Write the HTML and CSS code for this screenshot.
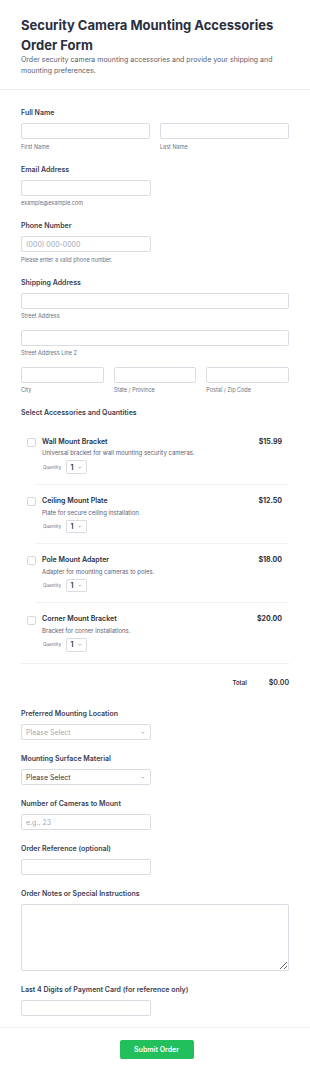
FILE: index.html
```html
<!DOCTYPE html>
<html lang="en">
<head>
<meta charset="utf-8">
<title>Security Camera Mounting Accessories Order Form</title>
<link rel="stylesheet" href="styles.css">
</head>
<body>
<div class="page">
  <header class="header">
    <h1 class="title">Security Camera Mounting Accessories Order Form</h1>
    <p class="subtitle">Order security camera mounting accessories and provide your shipping and mounting preferences.</p>
  </header>

  <form class="form">
    <div class="field">
      <div class="label">Full Name</div>
      <div class="row two">
        <div class="col"><input class="input" type="text"><div class="sublabel">First Name</div></div>
        <div class="col"><input class="input" type="text"><div class="sublabel">Last Name</div></div>
      </div>
    </div>

    <div class="field">
      <div class="label">Email Address</div>
      <div class="half"><input class="input" type="email"><div class="sublabel">example@example.com</div></div>
    </div>

    <div class="field">
      <div class="label">Phone Number</div>
      <div class="half"><input class="input" type="tel" placeholder="(000) 000-0000"><div class="sublabel">Please enter a valid phone number.</div></div>
    </div>

    <div class="field">
      <div class="label">Shipping Address</div>
      <input class="input" type="text"><div class="sublabel">Street Address</div>
      <div class="gap-top"><input class="input" type="text"><div class="sublabel">Street Address Line 2</div></div>
      <div class="row three gap-top">
        <div class="col"><input class="input" type="text"><div class="sublabel">City</div></div>
        <div class="col"><input class="input" type="text"><div class="sublabel">State / Province</div></div>
        <div class="col"><input class="input" type="text"><div class="sublabel">Postal / Zip Code</div></div>
      </div>
    </div>

    <div class="field products-field">
      <div class="label">Select Accessories and Quantities</div>
      <div class="products">
        <div class="product">
          <span class="checkbox"></span>
          <div class="product-body">
            <div class="product-name">Wall Mount Bracket</div>
            <div class="product-desc">Universal bracket for wall mounting security cameras.</div>
            <div class="qty"><span class="qty-label">Quantity</span><span class="qty-select">1<svg class="chev" viewBox="0 0 6 4"><path d="M1 1l2 2 2-2" fill="none" stroke="currentColor" stroke-width="0.8"/></svg></span></div>
          </div>
          <div class="price">$15.99</div>
        </div>
        <div class="product">
          <span class="checkbox"></span>
          <div class="product-body">
            <div class="product-name">Ceiling Mount Plate</div>
            <div class="product-desc">Plate for secure ceiling installation.</div>
            <div class="qty"><span class="qty-label">Quantity</span><span class="qty-select">1<svg class="chev" viewBox="0 0 6 4"><path d="M1 1l2 2 2-2" fill="none" stroke="currentColor" stroke-width="0.8"/></svg></span></div>
          </div>
          <div class="price">$12.50</div>
        </div>
        <div class="product">
          <span class="checkbox"></span>
          <div class="product-body">
            <div class="product-name">Pole Mount Adapter</div>
            <div class="product-desc">Adapter for mounting cameras to poles.</div>
            <div class="qty"><span class="qty-label">Quantity</span><span class="qty-select">1<svg class="chev" viewBox="0 0 6 4"><path d="M1 1l2 2 2-2" fill="none" stroke="currentColor" stroke-width="0.8"/></svg></span></div>
          </div>
          <div class="price">$18.00</div>
        </div>
        <div class="product last">
          <span class="checkbox"></span>
          <div class="product-body">
            <div class="product-name">Corner Mount Bracket</div>
            <div class="product-desc">Bracket for corner installations.</div>
            <div class="qty"><span class="qty-label">Quantity</span><span class="qty-select">1<svg class="chev" viewBox="0 0 6 4"><path d="M1 1l2 2 2-2" fill="none" stroke="currentColor" stroke-width="0.8"/></svg></span></div>
          </div>
          <div class="price">$20.00</div>
        </div>
      </div>
      <div class="total"><span class="total-label">Total</span><span class="total-value">$0.00</span></div>
    </div>

    <div class="field">
      <div class="label">Preferred Mounting Location</div>
      <div class="select-wrap half">
        <select class="select placeholder"><option>Please Select</option><option>Indoor Wall</option><option>Outdoor Wall</option><option>Ceiling</option></select>
        <svg class="select-chev" viewBox="0 0 6 4"><path d="M1 1l2 2 2-2" fill="none" stroke="currentColor" stroke-width="0.8"/></svg>
      </div>
    </div>

    <div class="field">
      <div class="label">Mounting Surface Material</div>
      <div class="select-wrap half">
        <select class="select"><option>Please Select</option><option>Brick</option><option>Wood</option><option>Concrete</option></select>
        <svg class="select-chev" viewBox="0 0 6 4"><path d="M1 1l2 2 2-2" fill="none" stroke="currentColor" stroke-width="0.8"/></svg>
      </div>
    </div>

    <div class="field">
      <div class="label">Number of Cameras to Mount</div>
      <div class="half"><input class="input" type="text" placeholder="e.g., 23"></div>
    </div>

    <div class="field">
      <div class="label">Order Reference (optional)</div>
      <div class="half"><input class="input" type="text"></div>
    </div>

    <div class="field">
      <div class="label">Order Notes or Special Instructions</div>
      <textarea class="textarea"></textarea>
    </div>

    <div class="field last-field">
      <div class="label">Last 4 Digits of Payment Card (for reference only)</div>
      <div class="half"><input class="input" type="text"></div>
    </div>
  </form>

  <footer class="footer">
    <button class="submit" type="button">Submit Order</button>
  </footer>
</div>
</body>
</html>
```

FILE: styles.css
```css
* { box-sizing: border-box; }

html, body {
  margin: 0;
  padding: 0;
  background: #ffffff;
}

body {
  font-family: Inter, "Noto Sans", "Liberation Sans", sans-serif;
  color: #374151;
}

.header {
  padding: 16px 21px 13px;
  border-bottom: 1px solid #e9ebee;
}

.title {
  margin: 0;
  font-size: 13px;
  line-height: 19.5px;
  font-weight: 700;
  color: #2a2f40;
}

.subtitle {
  margin: 0;
  font-size: 7px;
  line-height: 10.5px;
  color: #575e71;
}

.form {
  padding: 18px 21px 0;
}

.field {
  margin-bottom: 14px;
}

.field.last-field {
  margin-bottom: 10.5px;
}

.label {
  font-size: 7px;
  line-height: 10.5px;
  font-weight: 600;
  color: #3a4052;
  margin-bottom: 4.5px;
}

.row {
  display: grid;
  gap: 10px;
}

.row.two { grid-template-columns: 1fr 1fr; }
.row.three { grid-template-columns: 1fr 1fr 1fr; }

.half {
  width: 130px;
}

.gap-top { margin-top: 9.5px; }

.input,
.select,
.textarea {
  display: block;
  width: 100%;
  height: 16px;
  margin: 0;
  padding: 0 4px;
  border: 1px solid #d9dce2;
  border-radius: 2px;
  background: #ffffff;
  font-family: inherit;
  font-size: 7px;
  color: #374151;
  outline: none;
}

.input::placeholder {
  color: #a3a9b5;
}

.sublabel {
  margin-top: 4.5px;
  font-size: 5.5px;
  line-height: 7px;
  color: #6b7280;
}

.select-wrap {
  position: relative;
}

.select {
  appearance: none;
  -webkit-appearance: none;
  color: #2f3546;
}

.select.placeholder {
  color: #a3a9b5;
}

.select-chev {
  position: absolute;
  right: 6px;
  top: 6.5px;
  width: 4px;
  height: 3px;
  color: #6b7280;
}

.textarea {
  height: 67px;
  padding: 4px;
  resize: vertical;
}

/* products */
.products-field {
  margin-bottom: 21px;
}

.products-field .label {
  margin-bottom: 7px;
}

.products {
  border-bottom: 1px solid #eceef1;
}

.product {
  display: flex;
  align-items: flex-start;
  gap: 6px;
  padding: 11px 7px 11px 6px;
  background: repeating-linear-gradient(to right, #e3e6ea 0 1px, transparent 1px 2px) 14px 100% / calc(100% - 14px) 1px no-repeat;
}

.product.last {
  background: none;
}

.checkbox {
  flex: none;
  width: 9px;
  height: 9px;
  margin-top: 1.25px;
  border: 1px solid #d4d8de;
  border-radius: 2px;
  background: #ffffff;
}

.product-body {
  flex: 1;
}

.product-name {
  font-size: 7px;
  line-height: 10.5px;
  font-weight: 600;
  color: #2a2f40;
}

.product-desc {
  margin-top: 1.25px;
  font-size: 6px;
  line-height: 9px;
  color: #5a6173;
}

.qty {
  display: flex;
  align-items: center;
  gap: 5px;
  margin-top: 3px;
  padding-left: 1px;
}

.qty-label {
  font-size: 4.5px;
  color: #6b7280;
}

.qty-select {
  display: inline-flex;
  align-items: center;
  gap: 5px;
  width: 21.5px;
  height: 13.5px;
  padding-left: 3.5px;
  border: 1px solid #d9dce2;
  border-radius: 2px;
  font-size: 7px;
  font-weight: 600;
  color: #2a2f40;
}

.chev {
  width: 4px;
  height: 3px;
  color: #6b7280;
}

.price {
  font-size: 7px;
  line-height: 10.5px;
  font-weight: 700;
  color: #2a2f40;
}

.total {
  display: flex;
  justify-content: flex-end;
  align-items: baseline;
  gap: 22px;
  padding-top: 14px;
}

.total-label {
  font-size: 6px;
  line-height: 10.5px;
  font-weight: 600;
  color: #2a2f40;
}

.total-value {
  font-size: 7px;
  line-height: 10.5px;
  font-weight: 600;
  color: #2a2f40;
}

/* footer */
.footer {
  display: flex;
  justify-content: center;
  padding: 12.5px 0 17px 3px;
  border-top: 1px solid #eef0f2;
}

.submit {
  width: 74px;
  height: 19px;
  border: none;
  border-radius: 2px;
  background: #22c05c;
  color: #ffffff;
  font-family: inherit;
  font-size: 7px;
  font-weight: 600;
  cursor: pointer;
}
```
